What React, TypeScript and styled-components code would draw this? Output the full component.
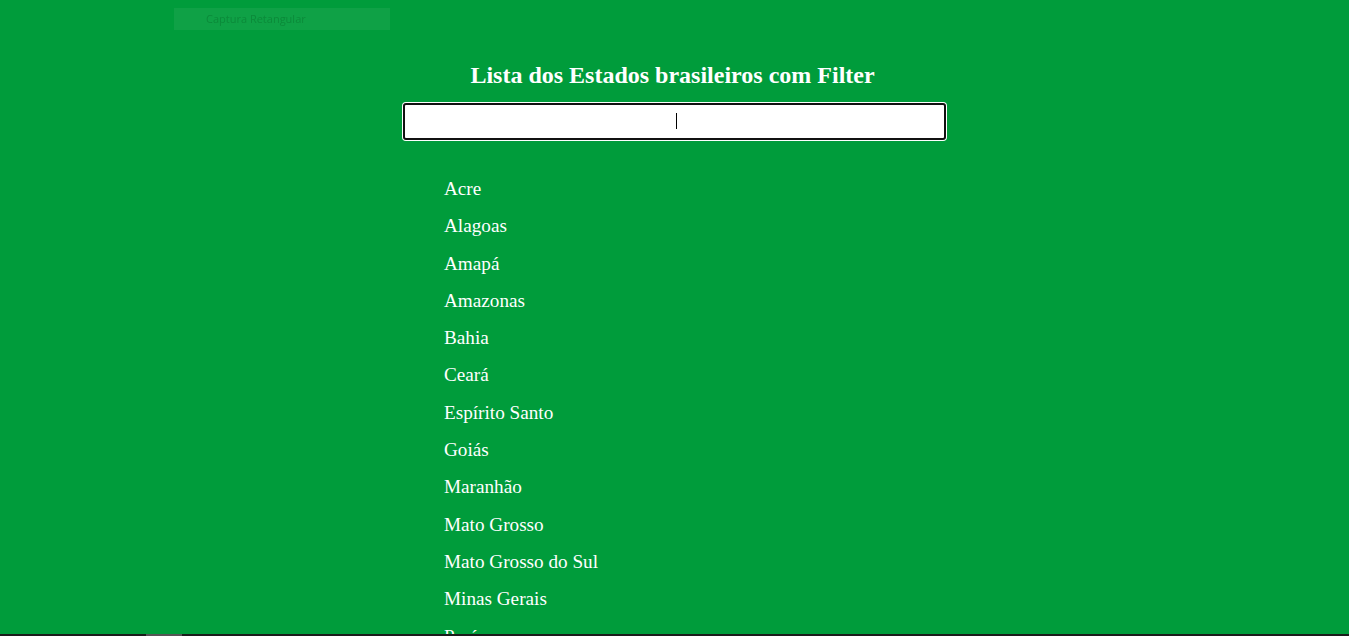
import React, { useState } from 'react';
import styled, { createGlobalStyle } from 'styled-components';

const estados = [
  'Acre',
  'Alagoas',
  'Amapá',
  'Amazonas',
  'Bahia',
  'Ceará',
  'Espírito Santo',
  'Goiás',
  'Maranhão',
  'Mato Grosso',
  'Mato Grosso do Sul',
  'Minas Gerais',
  'Pará',
  'Paraíba',
  'Paraná',
  'Pernambuco',
  'Piauí',
  'Rio de Janeiro',
  'Rio Grande do Norte',
  'Rio Grande do Sul',
  'Rondônia',
  'Roraima',
  'Santa Catarina',
  'São Paulo',
  'Sergipe',
  'Tocantins',
  'Distrito Federal',
];

const GlobalStyle = createGlobalStyle`
  html, body {
    margin: 0;
    padding: 0;
    background: #009c3b;
    height: 636px;
    overflow: hidden;
  }
`;

const Page = styled.main`
  display: flex;
  flex-direction: column;
  align-items: center;
  padding-top: 60px;
  font-family: 'Liberation Serif', 'Times New Roman', serif;
  color: #ffffff;
`;

const Title = styled.h2`
  margin: 0 0 13px;
  padding-right: 4px;
  font-size: 24px;
  font-weight: bold;
  line-height: 30px;
`;

const SearchBox = styled.div`
  position: relative;
  width: 543px;
  height: 37px;
`;

const SearchInput = styled.input`
  box-sizing: border-box;
  width: 100%;
  height: 100%;
  border: 2px solid #111111;
  border-radius: 3px;
  box-shadow: 0 0 0 1px #ffffff;
  outline: none;
  background: #ffffff;
  text-align: center;
  font-family: 'Liberation Serif', serif;
  font-size: 16px;
  caret-color: #000000;
`;

const Caret = styled.span`
  position: absolute;
  top: 10px;
  left: 273px;
  width: 1px;
  height: 16px;
  background: #000000;
  pointer-events: none;
`;

const List = styled.ul`
  box-sizing: border-box;
  width: 545px;
  margin: 38px 0 0;
  padding: 0 0 0 42px;
  list-style: none;
`;

const Item = styled.li`
  font-size: 19.2px;
  line-height: 21px;
  margin-bottom: 16.3px;
`;

const CaptureHint = styled.div`
  position: fixed;
  top: 8px;
  left: 174px;
  width: 216px;
  height: 22px;
  box-sizing: border-box;
  padding-left: 32px;
  background: rgba(255, 255, 255, 0.06);
  color: #0b8a3a;
  font-family: 'Open Sans', 'Noto Sans', sans-serif;
  font-size: 11px;
  line-height: 22px;
`;

const Taskbar = styled.div`
  position: fixed;
  left: 0;
  right: 0;
  bottom: 0;
  height: 2px;
  display: flex;
  background: #1b1b1b;
`;

const TaskbarMark = styled.span`
  margin-left: 146px;
  width: 36px;
  background: #555555;
`;

export default function App() {
  const [busca, setBusca] = useState('');
  const filtrados = estados.filter((e) => e.toLowerCase().includes(busca.toLowerCase()));

  return (
    <>
      <GlobalStyle />
      <Page>
        <Title>Lista dos Estados brasileiros com Filter</Title>
        <SearchBox>
          <SearchInput autoFocus value={busca} onChange={(e) => setBusca(e.target.value)} />
          {busca === '' && <Caret />}
        </SearchBox>
        <List>
          {filtrados.map((estado) => (
            <Item key={estado}>{estado}</Item>
          ))}
        </List>
      </Page>
      <CaptureHint>Captura Retangular</CaptureHint>
      <Taskbar>
        <TaskbarMark />
      </Taskbar>
    </>
  );
}
